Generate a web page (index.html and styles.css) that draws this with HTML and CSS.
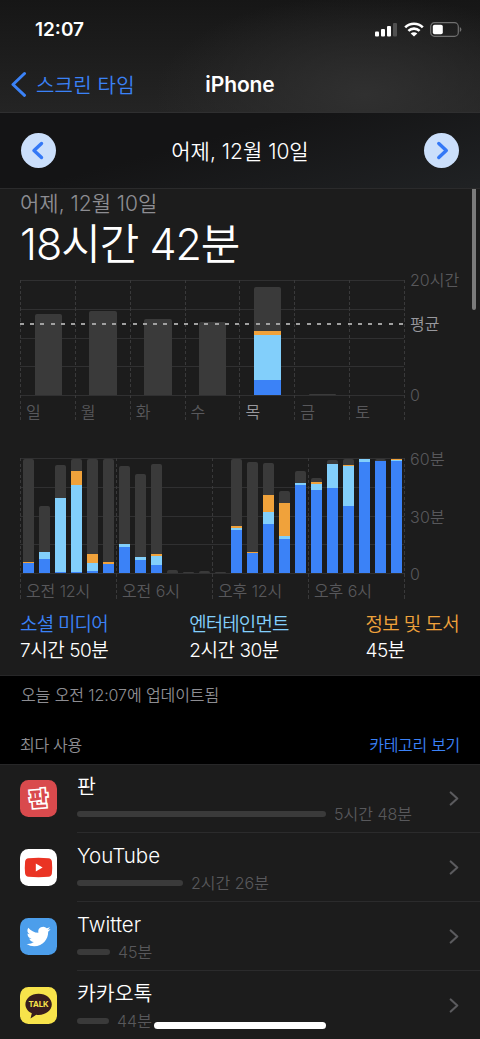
FILE: index.html
```html
<!DOCTYPE html>
<html lang="ko">
<head>
    <meta charset="UTF-8">
    <meta name="viewport" content="width=device-width, initial-scale=1.0">
    <title>스크린 타임</title>
    <link rel="stylesheet" href="styles.css">
</head>
<body>
    <header class="top">
        <div class="status">
            <span class="clock">12:07</span>
            <svg class="signal" width="22" height="15" viewBox="0 0 22 15" fill="#fff">
                <rect x="0" y="9.5" width="4" height="5" rx="1"/>
                <rect x="6" y="7" width="4" height="7.5" rx="1"/>
                <rect x="12" y="4" width="4" height="10.5" rx="1"/>
                <rect x="18" y="1" width="4" height="13.5" rx="1" fill="#505050"/>
            </svg>
            <svg class="wifi" width="20" height="15" viewBox="0 0 20 15" fill="none" stroke="#fff" stroke-width="2.6">
                <path d="M1.2 5.4a12.5 12.5 0 0 1 17.6 0"/>
                <path d="M4.4 8.9a8 8 0 0 1 11.2 0"/>
                <path d="M10 14.6L6.7 11.5a4.7 4.7 0 0 1 6.6 0z" fill="#fff" stroke="none"/>
            </svg>
            <svg class="battery" width="32" height="15" viewBox="0 0 32 15">
                <rect x="0.7" y="0.7" width="27.6" height="13.6" rx="3.8" fill="none" stroke="#707070" stroke-width="1.2"/>
                <rect x="2.8" y="2.8" width="10" height="9.4" rx="1.8" fill="#fff"/>
                <path d="M29.8 5v5q1.6-.7 1.6-2.5T29.8 5z" fill="#707070"/>
            </svg>
        </div>
        <div class="nav">
            <a class="back">
                <svg width="16" height="26" viewBox="0 0 16 26" fill="none" stroke="#3b82f7" stroke-width="3" stroke-linecap="round" stroke-linejoin="round"><path d="M13.5 2.5L2 13.5l11.5 10.8"/></svg>
                <span>스크린 타임</span>
            </a>
            <h1>iPhone</h1>
        </div>
    </header>

    <div class="datebar">
        <button class="round"><svg width="35" height="35" viewBox="0 0 35 35"><path d="M20.5 10.5L13 17.5l7.5 7"/></svg></button>
        <span class="date">어제, 12월 10일</span>
        <button class="round"><svg width="35" height="35" viewBox="0 0 35 35"><path d="M14.8 10.5l7.5 7-7.5 7"/></svg></button>
    </div>

    <section class="usage">
        <div class="scrollbar"></div>
        <p class="day">어제, 12월 10일</p>
        <p class="total">18시간 42분</p>

        <div class="chart week">
            <div class="plot" id="weekPlot"><div class="average"></div></div>
            <div class="axis">
                <span class="a-top">20시간</span>
                <span class="a-avg">평균</span>
                <span>0</span>
            </div>
        </div>

        <div class="chart day-chart">
            <div class="plot" id="dayPlot"></div>
            <div class="axis">
                <span class="a-half">60분</span>
                <span class="a-half">30분</span>
                <span>0</span>
            </div>
        </div>

        <div class="legend">
            <div><p class="c-social">소셜 미디어</p><p>7시간 50분</p></div>
            <div class="second"><p class="c-fun">엔터테인먼트</p><p>2시간 30분</p></div>
            <div><p class="c-info">정보 및 도서</p><p>45분</p></div>
        </div>
    </section>

    <p class="updated">오늘 오전 12:07에 업데이트됨</p>
    <div class="list-head"><span>최다 사용</span><a>카테고리 보기</a></div>

    <ul class="apps">
        <li>
            <svg class="icon" viewBox="0 0 37 37">
                <rect width="37" height="37" rx="8.5" fill="#d94a4d"/>
                <text x="18.7" y="26" text-anchor="middle" class="pann" transform="rotate(-4 18.5 18.5)">판</text>
            </svg>
            <div class="info">
                <p class="name">판</p>
                <div class="time"><i style="width: 249px"></i><span>5시간 48분</span></div>
            </div>
            <svg class="chevron" viewBox="0 0 10 16"><path d="M1.5 1.5L8.5 8l-7 6.5"/></svg>
        </li>
        <li>
            <svg class="icon" viewBox="0 0 37 37">
                <rect width="37" height="37" rx="8.5" fill="#fff"/>
                <path d="M8.5 9.3Q18.5 8.4 28.5 9.3q3 .2 3.4 3.2.6 6 0 12-.4 3-3.4 3.2-10 .9-20 0-3-.2-3.4-3.2-.6-6 0-12 .4-3 3.4-3.2z" fill="#ea3323"/>
                <path d="M15.8 14.6v7.8l6.8-3.9z" fill="#fff"/>
            </svg>
            <div class="info">
                <p class="name">YouTube</p>
                <div class="time"><i style="width: 106px"></i><span>2시간 26분</span></div>
            </div>
            <svg class="chevron" viewBox="0 0 10 16"><path d="M1.5 1.5L8.5 8l-7 6.5"/></svg>
        </li>
        <li>
            <svg class="icon" viewBox="0 0 37 37">
                <rect width="37" height="37" rx="8.5" fill="#4c9eeb"/>
                <path transform="translate(6.6 6.5)" d="M23.95 4.57a10 10 0 0 1-2.82.77 4.96 4.96 0 0 0 2.16-2.72c-.95.55-2 .95-3.13 1.18a4.92 4.92 0 0 0-8.38 4.48C7.69 8.1 4.07 6.13 1.64 3.16a4.93 4.93 0 0 0 1.52 6.57 4.9 4.9 0 0 1-2.23-.61v.06a4.92 4.92 0 0 0 3.95 4.83 5 5 0 0 1-2.21.08 4.94 4.94 0 0 0 4.6 3.42A9.87 9.87 0 0 1 0 19.54a14 14 0 0 0 7.55 2.21c9.05 0 14-7.5 14-13.98 0-.21 0-.42-.02-.63a9.9 9.9 0 0 0 2.42-2.57z" fill="#fff"/>
            </svg>
            <div class="info">
                <p class="name">Twitter</p>
                <div class="time"><i style="width: 33px"></i><span>45분</span></div>
            </div>
            <svg class="chevron" viewBox="0 0 10 16"><path d="M1.5 1.5L8.5 8l-7 6.5"/></svg>
        </li>
        <li>
            <svg class="icon" viewBox="0 0 37 37">
                <rect width="37" height="37" rx="8.5" fill="#f7e34b"/>
                <path d="M18.6 6.7c7.4 0 13.2 4.7 13.2 10.6S26 28 18.6 28q-1.2 0-2.4-.2L10.5 31.6l1.3-5.3C7.9 24.5 5.4 21.2 5.4 17.3 5.4 11.4 11.2 6.7 18.6 6.7z" fill="#371d1e"/>
                <text x="18.6" y="20.4" text-anchor="middle" class="talk">TALK</text>
            </svg>
            <div class="info">
                <p class="name">카카오톡</p>
                <div class="time"><i style="width: 32px"></i><span>44분</span></div>
            </div>
            <svg class="chevron" viewBox="0 0 10 16"><path d="M1.5 1.5L8.5 8l-7 6.5"/></svg>
        </li>
    </ul>
    <div class="home"></div>

    <script>
        // 막대 하나: [기타, 정보, 엔터테인먼트, 소셜] 높이(px)
        const week = [
            { label: '일', bars: [[81.5, 0, 0, 0]] },
            { label: '월', bars: [[84, 0, 0, 0]] },
            { label: '화', bars: [[76, 0, 0, 0]] },
            { label: '수', bars: [[73, 0, 0, 0]] },
            { label: '목', bars: [[44, 4, 45, 15]], on: true },
            { label: '금', bars: [[1, 0, 0, 0]] },
            { label: '토', bars: [[0, 0, 0, 0]] }
        ];
        const day = [
            { label: '오전 12시', bars: [[103, 1, 0, 10.5], [46, 0, 7.5, 14], [33, 0, 74, 1.5], [12, 14.5, 87, 1], [95, 9, 8.5, 2], [103, 2.5, 0, 9]] },
            { label: '오전 6시', bars: [[78, 0, 3, 26.5], [83, 0, 3.5, 13], [90, 2, 9.5, 8], [3, 0, 0, 0], [1.5, 0, 0, 0], [2.5, 0, 0, 0]] },
            { label: '오후 12시', bars: [[0.7, 0, 0, 0], [67.5, 2, 1.5, 43.5], [90, 1, 0, 20.5], [32, 17, 12, 49.5], [12, 33.5, 2.5, 34.5], [12, 0, 2.5, 88]] },
            { label: '오후 6시', bars: [[4, 1.5, 6.5, 83], [4, 0, 24, 85.5], [6, 1, 40, 67.5], [0, 0, 3, 111.5], [2, 0, 0, 112.5], [0, 1, 1, 112.5]] }
        ];
        const kinds = ['other', 'info-seg', 'fun', 'social'];

        function draw(id, groups) {
            document.getElementById(id).insertAdjacentHTML('afterbegin', groups.map(g =>
                `<div class="group"><div class="bars">${g.bars.map(b =>
                    `<div class="bar">${b.map((h, i) => h ? `<b class="${kinds[i]}" style="height:${h}px"></b>` : '').join('')}</div>`
                ).join('')}</div><span class="${g.on ? 'on' : ''}">${g.label}</span></div>`
            ).join(''));
        }

        draw('weekPlot', week);
        draw('dayPlot', day);
    </script>
</body>
</html>
```
FILE: styles.css
```css
* {
    box-sizing: border-box;
    margin: 0;
    padding: 0;
}
body {
    width: 480px;
    height: 1039px;
    overflow: hidden;
    position: relative;
    background-color: #000;
    color: #fff;
    font-family: Inter, "Noto Sans CJK KR", sans-serif;
    font-size: 20px;
    font-weight: 350;
    white-space: nowrap;
}
.top {
    height: 113px;
    border-bottom: 1px solid #2f2f30;
    background: radial-gradient(ellipse 210px 100px at 365px 95px, #303030, rgba(48, 48, 48, 0)), linear-gradient(#161616, #242424);
}
.status {
    display: flex;
    align-items: center;
    height: 59px;
    padding: 0 18px 0 35px;
}
.clock {
    flex: 1;
    font-size: 19px;
    font-weight: 600;
}
.wifi {
    margin: 0 6px 0 7px;
}
.nav {
    display: grid;
    grid-template-columns: 1fr auto 1fr;
    align-items: center;
    height: 50px;
    padding: 0 11px;
}
.back {
    display: flex;
    align-items: center;
    gap: 9px;
    letter-spacing: 0.2px;
    color: #3b82f7;
}
h1 {
    font-size: 21px;
    font-weight: 600;
    letter-spacing: -0.1px;
}
.datebar {
    display: flex;
    justify-content: space-between;
    align-items: center;
    height: 76px;
    padding: 0 21px;
    border-bottom: 1px solid #2b2b2c;
    background: linear-gradient(165deg, #141415 40%, #202224);
}
.date {
    font-size: 21px;
    line-height: 28px;
    padding-top: 2px;
}
.round {
    width: 35px;
    height: 35px;
    border: none;
    border-radius: 50%;
    background-color: #cbdffb;
}
.round path {
    fill: none;
    stroke: #3478f6;
    stroke-width: 3.4;
    stroke-linecap: round;
    stroke-linejoin: round;
}
.usage {
    position: relative;
    height: 487px;
    padding: 0 20px;
    background-color: #1c1c1c;
    border-bottom: 1px solid #272728;
}
.scrollbar {
    position: absolute;
    right: 4px;
    top: 0;
    width: 4px;
    height: 121px;
    border-radius: 0 0 2px 2px;
    background-color: #7b7b7b;
}
.day {
    height: 29px;
    line-height: 30px;
    font-size: 21px;
    color: #8d8d92;
}
.total {
    height: 52px;
    line-height: 52px;
    font-size: 43px;
    letter-spacing: -1px;
}
.chart {
    display: flex;
    height: 142px;
}
.week {
    margin-top: 10px;
}
.day-chart {
    margin-top: 36px;
}
.plot {
    position: relative;
    display: flex;
    width: 384px;
    background: repeating-linear-gradient(#303031 0 1px, transparent 1px 28.75px) 0 0 / 100% 116px no-repeat;
}
.group {
    flex: 1;
    background: repeating-linear-gradient(#39393a 0 3px, transparent 3px 5.5px) 0 0 / 1px 100% no-repeat;
}
.plot::after {
    content: "";
    width: 1px;
    margin-right: -1px;
    background: repeating-linear-gradient(#39393a 0 3px, transparent 3px 5.5px);
}
.bars {
    display: flex;
    height: 115px;
}
.bar {
    flex: 1;
    display: flex;
    flex-direction: column;
    justify-content: flex-end;
    padding: 0 2px 0 3px;
}
.week .bar {
    padding: 0 13px 0 14.5px;
}
.bar b {
    display: block;
}
.other {
    background-color: #3a3a3a;
    border-radius: 2px 2px 0 0;
}
.info-seg {
    background-color: #f0a23b;
}
.fun {
    background-color: #82cffb;
}
.social {
    background-color: #3b82f7;
}
.group span {
    display: block;
    padding: 7px 0 0 6px;
    line-height: 20px;
    font-size: 16px;
    letter-spacing: -0.1px;
    color: #58585b;
}
.day-chart .group span {
    padding-top: 8px;
}
.group .on {
    color: #98989d;
}
.average {
    position: absolute;
    left: 0;
    right: 0;
    top: 43px;
    height: 2px;
    background: repeating-linear-gradient(90deg, #a0a0a0 0 4px, transparent 4px 10.24px);
}
.axis {
    display: flex;
    flex-direction: column;
    margin: -10px 0 0 6px;
    line-height: 20px;
    font-size: 16px;
    color: #58585b;
}
.day-chart .axis {
    margin-top: -9px;
}
.a-top {
    height: 44px;
}
.a-avg {
    height: 71px;
    color: #98989d;
}
.a-half {
    height: 57.5px;
    letter-spacing: 0.2px;
}
.legend {
    display: flex;
    justify-content: space-between;
    padding: 12px 1px 0 0;
    line-height: 26px;
    font-size: 19px;
    letter-spacing: -0.45px;
}
.second {
    margin-left: 4px;
}
.c-social {
    letter-spacing: -0.8px;
    color: #3b82f7;
}
.c-fun {
    letter-spacing: -0.95px;
    color: #82cffb;
}
.c-info {
    letter-spacing: -0.65px;
    color: #f0a23b;
}
.updated {
    height: 38px;
    padding-left: 21px;
    line-height: 38px;
    font-size: 16px;
    letter-spacing: -0.1px;
    color: #8d8d92;
}
.list-head {
    display: flex;
    justify-content: space-between;
    height: 50px;
    padding: 12px 20px 0;
    line-height: 38px;
    font-size: 16px;
    letter-spacing: -0.3px;
    color: #8d8d92;
}
.list-head a {
    color: #3b82f7;
}
.apps {
    list-style: none;
    height: 275px;
    background-color: #1c1c1c;
    box-shadow: inset 0 1px #272728;
}
.apps li {
    display: flex;
    align-items: center;
    height: 69px;
    padding-left: 20px;
}
.icon {
    width: 37px;
    height: 37px;
    margin-right: 20px;
}
.pann {
    font-size: 20px;
    font-weight: 900;
    fill: #d94a4d;
    stroke: #fff;
    stroke-width: 3.4px;
    paint-order: stroke;
}
.talk {
    font-size: 7.8px;
    font-weight: 700;
    letter-spacing: -0.1px;
    fill: #f7e34b;
}
.info {
    flex: 1;
    height: 69px;
    border-bottom: 1px solid #2b2b2c;
}
.name {
    height: 39px;
    padding-top: 8px;
    line-height: 30px;
    font-size: 20.5px;
}
.time {
    display: flex;
    align-items: center;
    gap: 8px;
    height: 22px;
    line-height: 22px;
    font-size: 16px;
    color: #58585b;
}
.time i {
    height: 6px;
    border-radius: 3px;
    background-color: #3a3a3a;
}
.chevron {
    width: 47px;
    height: 69px;
    padding: 27px 21px 26px 16px;
    border-bottom: 1px solid #2b2b2c;
    fill: none;
    stroke: #5b5b5e;
    stroke-width: 2.2;
    stroke-linecap: round;
    stroke-linejoin: round;
}
.home {
    position: absolute;
    left: 154px;
    top: 1022px;
    width: 172px;
    height: 7px;
    border-radius: 4px;
    background-color: #fff;
}
```
